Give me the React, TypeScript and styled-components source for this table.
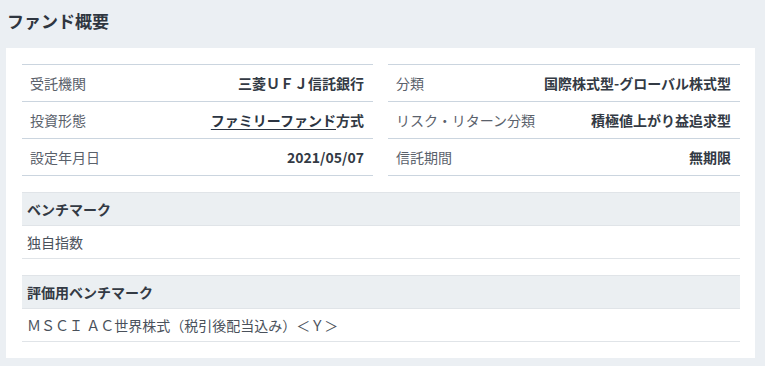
import React from "react";
import styled, { createGlobalStyle } from "styled-components";

const GlobalStyle = createGlobalStyle`
    body {
        margin: 0;
        background-color: #ebeff3;
        font-family: "Noto Sans CJK JP", "Noto Sans", sans-serif;
        color: #333a44;
    }
`;

const Page = styled.div`
    padding: 0 10px 9px 6px;
`;

const Title = styled.h2`
    margin: 0;
    height: 40px;
    display: flex;
    align-items: center;
    padding-left: 1px;
    font-size: 17px;
    font-weight: 700;
    color: #2f3640;
`;

const Card = styled.div`
    margin-top: 8px;
    background-color: #ffffff;
    padding: 16px 15px 16px 16px;
`;

const Columns = styled.div`
    display: grid;
    grid-template-columns: 351px 352px;
    column-gap: 15px;
`;

const Table = styled.dl`
    margin: 0;
    border-top: 1px solid #cbd5df;
`;

const Row = styled.div`
    display: flex;
    align-items: center;
    justify-content: space-between;
    height: 36px;
    padding: 0 9px 0 8px;
    border-bottom: 1px solid #cbd5df;
    font-size: 14px;
`;

const Label = styled.dt`
    color: #5a616b;
`;

const Value = styled.dd`
    margin: 0;
    font-weight: 700;
    color: #333a44;
`;

const Link = styled.a`
    color: #2b3442;
    text-decoration: underline;
    text-underline-offset: 3px;
`;

const Section = styled.section<{ $first?: boolean }>`
    margin-top: ${(p) => (p.$first ? "16px" : "16px")};
`;

const SectionHead = styled.div`
    height: 32px;
    display: flex;
    align-items: center;
    padding-left: 5px;
    background-color: #ebeff2;
    border-top: 1px solid #e0e4e8;
    border-bottom: 1px solid #e0e4e8;
    font-size: 14px;
    font-weight: 700;
    color: #333a44;
`;

const SectionBody = styled.div`
    height: 32px;
    display: flex;
    align-items: center;
    padding-left: 5px;
    border-bottom: 1px solid #e0e4e8;
    font-size: 14px;
    color: #4a515b;
`;

type Item = { label: string; value: React.ReactNode };

const leftItems: Item[] = [
    { label: "受託機関", value: "三菱ＵＦＪ信託銀行" },
    { label: "投資形態", value: (<><Link href="#">ファミリーファンド</Link>方式</>) },
    { label: "設定年月日", value: "2021/05/07" },
];

const rightItems: Item[] = [
    { label: "分類", value: "国際株式型-グローバル株式型" },
    { label: "リスク・リターン分類", value: "積極値上がり益追求型" },
    { label: "信託期間", value: "無期限" },
];

const InfoTable: React.FC<{ items: Item[] }> = ({ items }) => (
  <Table>
    {items.map((item) => (
      <Row key={item.label}>
        <Label>{item.label}</Label>
        <Value>{item.value}</Value>
      </Row>
    ))}
  </Table>
);

const App: React.FC = () => (
  <>
    <GlobalStyle />
    <Page>
      <Title>ファンド概要</Title>
      <Card>
        <Columns>
          <InfoTable items={leftItems} />
          <InfoTable items={rightItems} />
        </Columns>
        <Section $first>
          <SectionHead>ベンチマーク</SectionHead>
          <SectionBody>独自指数</SectionBody>
        </Section>
        <Section>
          <SectionHead>評価用ベンチマーク</SectionHead>
          <SectionBody>ＭＳＣＩ ＡＣ世界株式（税引後配当込み）＜Ｙ＞</SectionBody>
        </Section>
      </Card>
    </Page>
  </>
);

export default App;
